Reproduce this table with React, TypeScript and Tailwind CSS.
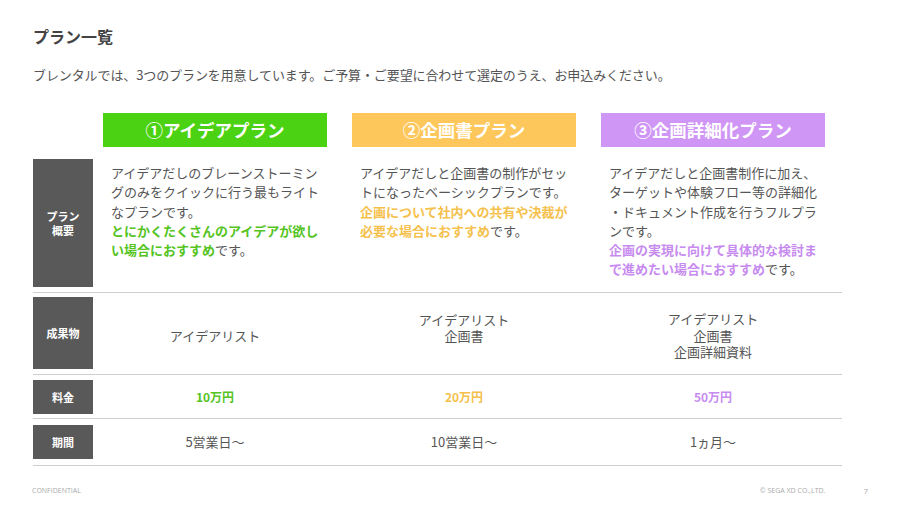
const plans = [
  {
    title: '①アイデアプラン',
    head: 'bg-[#4bd212]',
    accent: 'text-[#55c41f]',
    body: 'アイデアだしのブレーンストーミングのみをクイックに行う最もライトなプランです。',
    strong: 'とにかくたくさんのアイデアが欲しい場合におすすめ',
    output: ['アイデアリスト'],
    outputPad: 'pt-[6px]',
    price: '10万円',
    term: '5営業日〜',
  },
  {
    title: '②企画書プラン',
    head: 'bg-[#fec75b]',
    accent: 'text-[#f5c14d]',
    body: 'アイデアだしと企画書の制作がセットになったベーシックプランです。',
    strong: '企画について社内への共有や決裁が必要な場合におすすめ',
    output: ['アイデアリスト', '企画書'],
    outputPad: 'pb-[10px]',
    price: '20万円',
    term: '10営業日〜',
  },
  {
    title: '③企画詳細化プラン',
    head: 'bg-[#cf96f5]',
    accent: 'text-[#c78bf0]',
    body: 'アイデアだしと企画書制作に加え、ターゲットや体験フロー等の詳細化・ドキュメント作成を行うフルプランです。',
    strong: '企画の実現に向けて具体的な検討まで進めたい場合におすすめ',
    output: ['アイデアリスト', '企画書', '企画詳細資料'],
    outputPad: 'pt-[6px]',
    price: '50万円',
    term: '1ヵ月〜',
  },
];

function Label({ children, h }: { children: React.ReactNode; h: string }) {
  return (
    <div className={`w-[60px] ${h} shrink-0 bg-[#595959] flex items-center justify-center text-center text-white text-[11px] font-bold leading-[14px]`}>
      {children}
    </div>
  );
}

export default function App() {
  return (
    <div
      className="w-[900px] h-[506px] bg-white flex flex-col text-[#555]"
      style={{ fontFamily: '"Noto Sans CJK JP", "Noto Sans", sans-serif' }}
    >
      <div className="pl-[33px] pt-[26px]">
        <h1 className="text-[16px] font-bold leading-[20px] text-[#444]">プラン一覧</h1>
        <p className="mt-[21px] text-[13px] leading-[16px] tracking-[-0.1px] text-[#555]">
          ブレンタルでは、3つのプランを用意しています。ご予算・ご要望に合わせて選定のうえ、お申込みください。
        </p>

        {/* プラン見出し */}
        <div className="mt-[30px] ml-[70px] flex gap-[25px]">
          {plans.map(p => (
            <div key={p.title} className={`w-[224px] h-[34px] ${p.head} flex items-center justify-center text-white text-[17.5px] font-bold`}>
              {p.title}
            </div>
          ))}
        </div>

        <div className="w-[809px] mt-[12px]">
          {/* 概要 */}
          <div className="flex pb-[5px] border-b border-[#cfcfcf]">
            <Label h="h-[128px]">
              プラン<br />概要
            </Label>
            <div className="ml-[10px] flex gap-[25px]">
              {plans.map(p => (
                <div key={p.title} className="w-[224px] pl-[8px] pr-[6px] pt-[4px] text-[13px] leading-[19.3px] [line-break:anywhere]">
                  {p.body}
                  <br />
                  <span className={`font-bold ${p.accent}`}>{p.strong}</span>です。
                </div>
              ))}
            </div>
          </div>

          {/* 成果物 */}
          <div className="flex pt-[4px] pb-[5px] border-b border-[#cfcfcf]">
            <Label h="h-[72px]">成果物</Label>
            <div className="ml-[10px] flex gap-[25px]">
              {plans.map(p => (
                <div key={p.title} className={`w-[224px] flex flex-col items-center justify-center text-[13px] leading-[16.5px] ${p.outputPad}`}>
                  {p.output.map(o => (
                    <div key={o}>{o}</div>
                  ))}
                </div>
              ))}
            </div>
          </div>

          {/* 料金 */}
          <div className="flex pt-[5px] pb-[4px] border-b border-[#cfcfcf]">
            <Label h="h-[34px]">料金</Label>
            <div className="ml-[10px] flex gap-[25px]">
              {plans.map(p => (
                <div key={p.title} className={`w-[224px] flex items-center justify-center text-[12px] font-bold ${p.accent}`}>
                  {p.price}
                </div>
              ))}
            </div>
          </div>

          {/* 期間 */}
          <div className="flex pt-[6px] pb-[6px] border-b border-[#cfcfcf]">
            <Label h="h-[34px]">期間</Label>
            <div className="ml-[10px] flex gap-[25px]">
              {plans.map(p => (
                <div key={p.title} className="w-[224px] flex items-center justify-center text-[13px]">
                  {p.term}
                </div>
              ))}
            </div>
          </div>
        </div>
      </div>

      <div
        className="mt-auto pb-[9px] pl-[32px] pr-[32px] flex items-center text-[7px] text-[#aaa]"
        style={{ fontFamily: '"Open Sans", sans-serif' }}
      >
        <span>CONFIDENTIAL</span>
        <span className="ml-auto">© SEGA XD CO.,LTD.</span>
        <span className="ml-[38px] text-[8px]">7</span>
      </div>
    </div>
  );
}
